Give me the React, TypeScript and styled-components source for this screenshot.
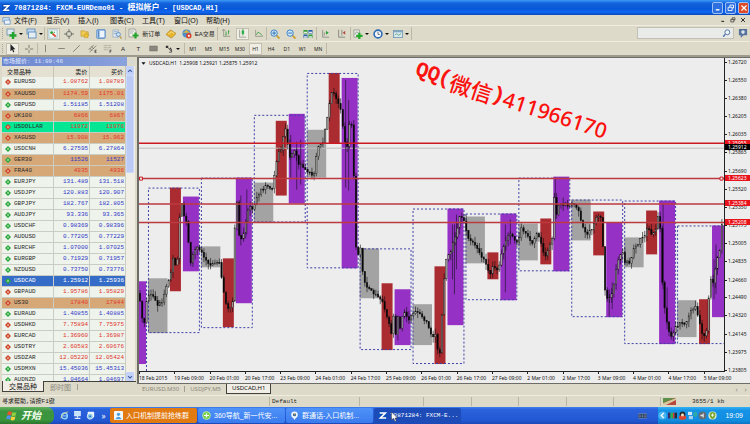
import React from "react";
import styled, { createGlobalStyle, css } from "styled-components";

const SANS = `"Noto Sans", "Noto Sans CJK SC", sans-serif`;
const MONO = `"Liberation Mono", "Noto Sans CJK SC", monospace`;
const MENU = `"Liberation Sans", "Noto Sans CJK SC", sans-serif`;
const FACE = "#dedac9";

const GlobalStyle = createGlobalStyle`
  * { box-sizing: border-box; }
  body { margin: 0; background: ${FACE}; font-family: ${SANS}; color: #222; }
  button, input { font: inherit; color: inherit; border: 0; background: none; padding: 0; margin: 0; }
  svg { display: block; flex: none; }
`;

/* ---------- frame ---------- */
const Page = styled.div`
  display: flex;
  flex-direction: column;
  height: 100vh;
  min-height: 400px;
  overflow: hidden;
`;

const TitleBar = styled.header`
  display: flex;
  align-items: center;
  flex: none;
  height: 15px;
  padding: 0 1px 0 2px;
  background: linear-gradient(#3d9af8 0, #1262dc 22%, #0857d8 60%, #0e66f4 80%, #0b48b8 100%);
`;
const Title = styled.h1`
  flex: 1;
  margin: 0 0 0 4px;
  font: bold 7px/13px ${MONO};
  color: #fff;
  white-space: pre;
`;
const TitleCjk = styled.span`
  font-size: 8px;
`;
const WindowButton = styled.button<{ $close?: boolean }>`
  display: grid;
  place-items: center;
  width: 11px;
  height: 12px;
  margin-left: 2px;
  border: 1px solid #9fc0f5;
  border-radius: 2px;
  color: #fff;
  background: ${(p) => (p.$close ? "#dc4a26" : "#2e6fe0")};
`;

const MenuBar = styled.nav`
  display: flex;
  align-items: center;
  flex: none;
  height: 10px;
  padding: 0 2px;
  background: ${FACE};
`;
const MenuItem = styled.button`
  width: 32px;
  font: 7px/9px ${MENU};
  text-align: left;
  white-space: nowrap;
  color: #111;
`;
const MenuLogo = styled.span`
  width: 12px;
`;
const MdiButton = styled.button`
  display: grid;
  place-items: center;
  width: 10px;
  height: 9px;
`;

/* ---------- toolbars ---------- */
const ToolRow = styled.div<{ $tall?: boolean }>`
  display: flex;
  align-items: stretch;
  flex: none;
  height: ${(p) => (p.$tall ? 16 : 14)}px;
  padding-left: 2px;
  border-top: 1px solid #efece0;
`;
const Grip = styled.span`
  width: 2px;
  margin: 2px 0;
  border-left: 1px dotted #a8a594;
`;
const ToolGroup = styled.div<{ $width: number }>`
  display: flex;
  align-items: center;
  justify-content: space-around;
  width: ${(p) => p.$width}px;
  margin: 1px 0;
  border-right: 1px solid #bdb9a6;
`;
const Tool = styled.button<{ $on?: boolean; $label?: boolean }>`
  display: flex;
  align-items: center;
  justify-content: center;
  gap: 3px;
  min-width: 13px;
  height: 12px;
  white-space: nowrap;
  font: ${(p) => (p.$label ? `6px/10px ${MENU}` : `5px/10px ${SANS}`)};
  ${(p) =>
    p.$on &&
    css`
      background: #efede4;
      outline: 1px solid #c3c0b0;
      outline-offset: -1px;
    `}
`;
const DropTool = styled(Tool)`
  width: 20px;
  gap: 2px;
  &::after {
    content: "";
    border: 2px solid transparent;
    border-top-color: #111;
    border-bottom: 0;
  }
`;
const Spacer = styled.span`
  flex: 1;
`;
const SearchBox = styled.label`
  display: flex;
  align-items: center;
  width: 97px;
  height: 12px;
  margin: 1px 2px 0 0;
  padding-right: 2px;
  background: #e9ebe8;
  border: 1px solid #c2c0b4;
`;
const SearchInput = styled.input`
  flex: 1;
  min-width: 0;
  height: 10px;
  font-size: 6px;
  outline: 0;
`;
const ChatButton = styled.button`
  display: grid;
  place-items: center;
  width: 13px;
  height: 12px;
  margin: 1px 1px 0 0;
`;

/* ---------- market watch ---------- */
const Main = styled.main`
  display: flex;
  flex: 1;
  min-height: 0;
  border-top: 2px solid #9d9a8e;
`;
const Watch = styled.section`
  display: flex;
  flex-direction: column;
  flex: none;
  width: 136px;
  padding-left: 2px;
`;
const WatchTitle = styled.div`
  display: flex;
  align-items: center;
  flex: none;
  height: 9px;
  font: bold 6px/9px ${MONO};
  color: #c6d3f4;
`;
const WatchCaption = styled.h2`
  flex: 1;
  margin: 0;
  padding-left: 1px;
  font: inherit;
  background: linear-gradient(90deg, #6a86cf, #8aa2dc);
`;
const CloseButton = styled.button`
  display: grid;
  place-items: center;
  width: 9px;
  height: 8px;
`;
const WatchBody = styled.div`
  display: flex;
  flex: 1;
  min-height: 0;
  overflow: hidden;
  border-bottom: 1px solid #44423c;
`;
const QuoteTable = styled.table`
  flex: 1;
  align-self: flex-start;
  table-layout: fixed;
  border-collapse: collapse;
  font: 6px/10px ${MONO};
`;
const HeadCell = styled.th<{ $left?: boolean }>`
  width: ${(p) => (p.$left ? "42%" : "29%")};
  height: 11px;
  padding: ${(p) => (p.$left ? "0 0 0 5px" : "0 2px 0 0")};
  text-align: ${(p) => (p.$left ? "left" : "right")};
  font: 6px/10px ${MENU};
  color: #111;
  background: #e4e0d2;
  border-right: 1px solid #c9c5b6;
`;
type Tone = "plain" | "tan" | "green" | "sel";
const tones: Record<Tone, string> = { plain: "#eef3ec", tan: "#d6a878", green: "#05e694", sel: "#356cc8" };
const QuoteRow = styled.tr<{ $tone: Tone }>`
  height: 11px;
  background: ${(p) => tones[p.$tone]};
  color: ${(p) => (p.$tone === "sel" ? "#fff" : "#2a2a2a")};
`;
const SymbolCell = styled.th`
  height: 11px;
  padding: 0 0 0 3px;
  font-weight: normal;
  text-align: left;
  border: solid #c9cdc4;
  border-width: 0 1px 1px 0;
`;
const SymbolName = styled.span`
  display: flex;
  align-items: center;
  gap: 3px;
`;
const PriceCell = styled.td<{ $color: string }>`
  height: 11px;
  padding: 0 1px 0 0;
  text-align: right;
  color: ${(p) => p.$color};
  border: solid #c9cdc4;
  border-width: 0 1px 1px 0;
`;
const ScrollTrack = styled.div`
  display: flex;
  flex-direction: column;
  justify-content: space-between;
  width: 9px;
  margin-right: 1px;
  background: #f1eee6;
`;
const ScrollButton = styled.button`
  display: grid;
  place-items: center;
  width: 8px;
  height: 9px;
  border-radius: 1px;
  background: #c3d2fa;
`;
const ScrollThumb = styled.div`
  width: 8px;
  height: 98px;
  border-radius: 1px;
  background: #bccbf5;
  border: 1px solid #ccd8fb;
`;
const TabStrip = styled.div<{ $height: number }>`
  display: flex;
  flex: none;
  align-items: flex-start;
  height: ${(p) => p.$height}px;
  font: 7px/9px ${MENU};
`;
const Tab = styled.button<{ $on?: boolean; $small?: boolean }>`
  height: 10px;
  padding: 0 6px;
  white-space: nowrap;
  ${(p) =>
    p.$small &&
    css`
      padding: 0 5px;
      font: 6px/9px ${SANS};
    `}
  color: ${(p) => (p.$on ? "#111" : "#8a877b")};
  ${(p) =>
    p.$on &&
    css`
      margin-top: -1px;
      height: 11px;
      background: #f0eee6;
      border: 1px solid #44423c;
      border-top: 0;
    `}
`;

/* ---------- chart ---------- */
const ChartPane = styled.section`
  display: flex;
  flex-direction: column;
  flex: 1;
  min-width: 0;
  margin-left: 1px;
`;
const ChartFrame = styled.div`
  position: relative;
  display: grid;
  grid-template-columns: 1fr 25px;
  grid-template-rows: 1fr 11px;
  flex: 1;
  min-height: 0;
  background: #ededed;
  border: solid #6e6c66;
  border-width: 1px 0 1px 2px;
`;
const Plot = styled.svg`
  width: 100%;
  height: 100%;
  min-height: 0;
  border-right: 1px solid #222;
  border-bottom: 1px solid #222;
`;
const ChartCaption = styled.div`
  position: absolute;
  top: 1px;
  left: 2px;
  display: flex;
  align-items: center;
  gap: 3px;
  font: 5px/8px ${SANS};
  color: #111;
  white-space: pre;
`;
const PriceAxis = styled.div`
  position: relative;
  font: 5px/6px ${SANS};
  color: #111;
`;
const PriceMark = styled.span<{ $fill?: string }>`
  position: absolute;
  left: 0;
  right: 0;
  height: 6px;
  margin-top: -3px;
  padding-left: 3px;
  color: ${(p) => (p.$fill ? "#fff" : "#111")};
  background: ${(p) => p.$fill || "none"};
  &::before {
    content: "";
    position: absolute;
    left: 0;
    top: 3px;
    width: 2px;
    height: 1px;
    background: ${(p) => p.$fill || "#222"};
  }
`;
const TimeAxis = styled.div`
  grid-column: 1 / -1;
  display: grid;
  grid-template-columns: repeat(17, 1fr);
  padding-right: 11px;
  font: 5px/8px ${SANS};
  color: #111;
`;
const TimeMark = styled.span`
  min-width: 0;
  white-space: nowrap;
  &::before {
    content: "";
    display: block;
    width: 1px;
    height: 2px;
    background: #222;
  }
`;
const Watermark = styled.div`
  position: absolute;
  left: 46%;
  top: 0;
  display: flex;
  align-items: center;
  color: #fb100c;
  font: 500 21px/24px "Noto Sans", sans-serif;
  white-space: nowrap;
  transform-origin: 0 0;
  transform: rotate(18deg);
`;
const WatermarkMono = styled.span`
  font: 20px/24px "Liberation Mono", monospace;
  -webkit-text-stroke: 1px #fb100c;
`;
const WatermarkCjk = styled.span`
  font: 500 22px/24px "Noto Sans CJK SC", sans-serif;
`;
const TabDivider = styled.span`
  width: 1px;
  height: 6px;
  margin-top: 2px;
  background: #a19e90;
`;
const ScrollTabs = styled.button`
  width: 9px;
  height: 10px;
  font: 7px/9px ${SANS};
  color: #8d8b84;
`;

/* ---------- status and task bars ---------- */
const StatusBar = styled.footer`
  display: flex;
  align-items: center;
  flex: none;
  height: 12px;
  font: 6px/10px ${MONO};
  border-top: 1px solid #efece0;
  color: #222;
`;
const StatusCell = styled.span<{ $width?: number }>`
  display: flex;
  align-items: center;
  ${(p) => (p.$width ? `flex: 0 0 ${p.$width}px;` : "flex: 1;")}
  height: 9px;
  padding-left: 2px;
  white-space: pre;
  & + & {
    border-left: 1px solid #bab6a4;
  }
`;
const StatusText = styled.span`
  margin-left: 16px;
`;
const TaskBar = styled.div`
  display: flex;
  align-items: center;
  flex: none;
  height: 17px;
  color: #fff;
  background: linear-gradient(#3d7ff0 0, #2a62dc 15%, #2257d2 80%, #1c48b4 100%);
`;
const StartButton = styled.button`
  display: flex;
  align-items: center;
  gap: 4px;
  width: 54px;
  height: 17px;
  padding-left: 6px;
  border-radius: 0 7px 7px 0;
  font: italic bold 10px/15px ${MENU};
  color: #f3fff0;
  background: linear-gradient(#63b45f 0, #3c9340 25%, #3a963c 75%, #2b7430 100%);
`;
const QuickLaunch = styled.div`
  display: flex;
  align-items: center;
  justify-content: space-around;
  width: 56px;
  padding-left: 4px;
`;
const QuickButton = styled.button`
  display: grid;
  place-items: center;
  width: 11px;
  height: 13px;
  font: 8px/10px ${SANS};
`;
const Task = styled.button<{ $look?: "alert" | "current" }>`
  position: relative;
  display: flex;
  align-items: center;
  gap: 3px;
  width: 87px;
  height: 15px;
  margin-right: 1px;
  padding-left: 4px;
  border-radius: 2px;
  overflow: hidden;
  white-space: pre;
  font: 7px/13px ${MENU};
  background: ${(p) =>
    p.$look === "alert" ? "#e27a12" : p.$look === "current" ? "#1d4cb8" : "linear-gradient(#4f92f8, #3a7cee)"};
`;
const MonoLabel = styled.span`
  font: 6px/13px ${MONO};
`;
const Pointer = styled.svg`
  position: absolute;
  left: 17px;
  top: 4px;
`;
const Tray = styled.div`
  display: flex;
  align-items: center;
  gap: 1px;
  height: 17px;
  padding: 0 7px 0 0;
  font: 7px/15px ${MENU};
  background: linear-gradient(#35b0f4 0, #1593e6 20%, #118de0 80%, #0f72c0 100%);
`;
const Clock = styled.time`
  margin-left: 7px;
`;
const Keyboard = styled.span`
  margin-right: 11px;
`;

/* ---------- icons ---------- */
const art: Record<string, React.ReactNode> = {
  newChart: (<><rect x="1" y="1" width="7" height="6" fill="#dfe9f2" stroke="#5b7f9c" strokeWidth=".7" /><path d="M7 4v7M3.500 7.500h7" stroke="#22a52c" strokeWidth="2.400" /></>),
  profiles: (<><rect x="1" y="1" width="8" height="5" fill="#c7dcf1" stroke="#5484b4" strokeWidth=".8" /><rect x="2.500" y="4" width="7.500" height="6" fill="#e2edf6" stroke="#5484b4" strokeWidth=".8" /></>),
  watch: (<><rect x="1" y="1" width="9" height="9" fill="#f4f8f4" stroke="#7ab0d0" strokeWidth=".7" /><circle cx="4" cy="4" r="1.600" fill="#26a63a" /><path d="M5 5l3.500 3.500" stroke="#dd4631" strokeWidth="2" /><path d="M7 3v1.500" stroke="#26a63a" /></>),
  navigator: (<><circle cx="5.500" cy="5.500" r="3" fill="none" stroke="#777b73" /><path d="M5.500 0v4M5.500 7v4M0 5.500h4M7 5.500h4" stroke="#686d66" /></>),
  folder: (<><path d="M1 2h4l1 1h3v5H1z" fill="#f0cb55" stroke="#b58b23" strokeWidth=".6" /><path d="M7 4l1 2 2 .4-1.500 1.500.4 2L7 9l-2 1 .3-2L4 6.400 6.200 6z" fill="#f6c62c" stroke="#b58b23" strokeWidth=".5" /></>),
  dataWin: (<><rect x="1" y="1" width="9" height="9" rx="1" fill="#edf4fa" stroke="#4c86c8" strokeWidth="1.200" /><path d="M3 2v7" stroke="#4c86c8" strokeWidth="1.500" /></>),
  tester: (<><path d="M1 1h6v8H1z" fill="#dfe8f0" stroke="#8ba3b8" strokeWidth=".7" /><path d="M2 3h4M2 5h3" stroke="#6d8fb2" strokeWidth=".7" /><circle cx="7" cy="6" r="2.200" fill="#cfe3f6" stroke="#4176b8" strokeWidth=".8" /><path d="M8.500 8l2 2.500" stroke="#b8963c" strokeWidth="1.300" /></>),
  order: (<><path d="M1 1h6l1 2v6H1z" fill="#f2f2ed" stroke="#777" strokeWidth=".6" /><path d="M2 3h4M2 5h3" stroke="#888" strokeWidth=".6" /><path d="M7.500 4.500v6M4.500 7.500h6" stroke="#25a52d" strokeWidth="2.200" /></>),
  editor: (<><path d="M0 6l5-5 6 4-5 5z" fill="#e8b52c" stroke="#a87a15" strokeWidth=".7" /><path d="M2 6l4-3 3 2" fill="none" stroke="#fae58e" /></>),
  ea: (<><circle cx="5" cy="5" r="4.500" fill="#4b8fca" /><path d="M1 4l4-3 4 3z" fill="#e2b33c" /><circle cx="7.500" cy="7.500" r="3" fill="#d8412c" /><rect x="6.500" y="6.500" width="2" height="2" fill="#fff" /></>),
  bars: (<><path d="M2 1v8h8M0 2.500L2 0l2 2.500" fill="none" stroke="#7c8279" strokeWidth=".8" /><path d="M5 3v5M4 7h1M8 1.500v5M8 3h1" stroke="#2a9a39" /></>),
  candles: (<><path d="M2 1v9h8" fill="none" stroke="#7c8279" strokeWidth=".8" /><path d="M6 0v8" stroke="#238433" /><rect x="4.500" y="2" width="3" height="4" fill="#2bb04a" /></>),
  line: (<><path d="M2 1v8h9" fill="none" stroke="#7c8279" strokeWidth=".8" /><path d="M3 7l2-3 2 1 3 3" fill="none" stroke="#2a9a39" /></>),
  zoomIn: (<><path d="M7 7l3.500 3.500" stroke="#c6a030" strokeWidth="2" /><circle cx="4.500" cy="4.500" r="3.500" fill="#cfe6f6" stroke="#3e87c8" strokeWidth="1.100" /><path d="M4.500 2.500v4M2.500 4.500h4" stroke="#286cb4" /></>),
  zoomOut: (<><path d="M7 7l3.500 3.500" stroke="#c6a030" strokeWidth="2" /><circle cx="4.500" cy="4.500" r="3.500" fill="#cfe6f6" stroke="#3e87c8" strokeWidth="1.100" /><path d="M2.500 4.500h4" stroke="#286cb4" /></>),
  tile: (<><path d="M.5 1h4.500v4H.5zM6 6h4.500v4H6z" fill="#2f9c3c" /><path d="M6 1h4.500v4H6zM.5 6H5v4H.5z" fill="#2b5fae" /><path d="M1 3h3.500v1.500H1zM6.500 3H10v1.500H6.500zM1 8h3.500v1.500H1zM6.500 8H10v1.500H6.500z" fill="#e4eee8" /></>),
  autoscroll: (<><path d="M2 1v9h8M4 4v4" fill="none" stroke="#7c8279" strokeWidth=".9" /><path d="M6 2l3.500 2.500L6 7z" fill="#26a038" /></>),
  shift: (<><path d="M2 1v9h8M6 1v7" fill="none" stroke="#6c726a" strokeWidth=".9" /><path d="M10 2L7 4.500 10 7z" fill="#b1483c" /></>),
  indicator: (<><path d="M1 1h6v8H1z" fill="#eceee8" stroke="#7f867e" strokeWidth=".7" /><path d="M2 6q2-5 4-1" fill="none" stroke="#666" strokeWidth=".7" /><path d="M7 4v7M3.500 7.500h7" stroke="#23aa2b" strokeWidth="2.400" /></>),
  clock: (<><circle cx="5.500" cy="5.500" r="4.300" fill="#f3f7fb" stroke="#2e6ab6" strokeWidth="1.800" /><path d="M5.500 3v3h2" fill="none" stroke="#444" strokeWidth=".8" /></>),
  template: (<><rect x=".5" y="1.500" width="10" height="8" fill="#d9e8ef" stroke="#5e8cab" strokeWidth=".8" /><path d="M1 3h9" stroke="#5e8cab" /><path d="M2 7l2-2 2 2 3-2" fill="none" stroke="#3f9a60" strokeWidth=".8" /></>),
  cursor: (<path d="M3 0v9l2-2 1.500 3.500 1.300-.6L6.400 6.500H9z" fill="#222" />),
  cross: (<path d="M5.500 1v3.500M5.500 6.500V10M1 5.500h3.500M6.500 5.500H10" stroke="#77756c" />),
  vline: (<path d="M5.500 1v9" stroke="#77756c" />),
  hline: (<path d="M1.500 5.500h8" stroke="#77756c" />),
  trend: (<path d="M1.500 9.500l8-8" stroke="#77756c" />),
  channel: (<><path d="M1 7l6-6M2 10l8-8M2 5l3 3M4 3l3 3" stroke="#5c5a53" strokeWidth=".8" /><path d="M10.500 7.500H8.500v3h2M8.500 9h1.500" fill="none" stroke="#333" strokeWidth=".8" /></>),
  fib: (<><path d="M1 2h9M1 4.500h9M1 7h6" stroke="#85826f" strokeDasharray="1 .6" strokeWidth=".8" /><path d="M8.500 11V7.500h2M8.500 9h1.500" fill="none" stroke="#333" strokeWidth=".8" /></>),
  textBox: (<rect x=".5" y=".5" width="10" height="10" fill="none" stroke="#77756c" strokeDasharray="1 1" strokeWidth=".8" />),
  rect: (<rect x="1" y="2.500" width="9" height="6" fill="#8a887e" stroke="#5f5d55" strokeWidth=".6" />),
  arrows: (<><path d="M1 2h3v3H1zM5 6l2-2 1 3z" fill="#333" /><path d="M4 5l4 4M8 6v4H5" fill="none" stroke="#444" /></>),
  search: (<><circle cx="6.500" cy="4" r="3" fill="#eef4fa" stroke="#5676aa" strokeWidth="1.200" /><path d="M4 6.500L1.500 9.500" stroke="#5676aa" strokeWidth="1.700" /></>),
  chat: (<><path d="M1 1h9v7H6l-3 3V8H1z" fill="#56719b" /><circle cx="5.500" cy="4.500" r="2" fill="#dbe4ef" /></>),
  logo: (<><rect width="11" height="11" rx="2" fill="#0d4fbb" /><path d="M2 2.500h7L3 8.500h7" fill="none" stroke="#fff" strokeWidth="2" /></>),
  doc: (<><path d="M1 2h8v5H1z" fill="#d7e6f5" stroke="#4e82bd" strokeWidth=".8" /><path d="M3 5h7v5H3z" fill="#eef4fa" stroke="#4e82bd" strokeWidth=".8" /></>),
  min: (<path d="M2.500 8h5" stroke="currentColor" strokeWidth="2" />),
  restore: (<path d="M4 4V1.500h5v4H7M1.500 4.500h5.500v4.500H1.500z" fill="none" stroke="currentColor" strokeWidth="1.200" />),
  close: (<path d="M2 2l7 7M9 2L2 9" stroke="currentColor" strokeWidth="1.700" />),
  up: (<path d="M2 7l3.500-3.500L9 7" fill="none" stroke="#3f5c9c" strokeWidth="2" />),
  down: (<path d="M2 4l3.500 3.500L9 4" fill="none" stroke="#3f5c9c" strokeWidth="2" />),
  caret: (<path d="M1 3h9L5.500 8z" fill="#111" />),
  flag: (<><path d="M2 2q2-1.500 4 0L5 5.500q-2-1.500-4 0z" fill="#e8552d" /><path d="M6.500 2q2 1.500 4 0l-1 3.500q-2 1.500-4 0z" fill="#8fd046" /><path d="M1 6q2-1.500 4 0l-1 3.500q-2-1.500-4 0z" fill="#4f93ee" /><path d="M5.500 6.200q2 1.500 4 0l-1 3.500q-2 1.500-4 0z" fill="#f8cf3c" /></>),
  ie: (<><circle cx="5.500" cy="6" r="3.500" fill="none" stroke="#8fd2ff" strokeWidth="1.800" /><path d="M3 6h6" stroke="#8fd2ff" strokeWidth="1.400" /><path d="M1 9Q2 3 10 1" fill="none" stroke="#f2d878" strokeWidth=".9" /></>),
  desktop: (<><rect x="2" y="0" width="7" height="6" fill="#c5e3fb" stroke="#fff" strokeWidth=".7" /><path d="M5.500 6v2M2 9h7" stroke="#e3eefb" strokeWidth="1.500" /></>),
  media: (<><rect x="2" y="1" width="8" height="7" rx="1" fill="#e8f3fb" /><circle cx="5" cy="6.500" r="3.500" fill="#7fc0ec" stroke="#fff" strokeWidth=".8" /><circle cx="5" cy="6.500" r="1" fill="#205c9c" /></>),
  contact: (<><rect width="11" height="11" rx="1" fill="#f3f7fa" /><circle cx="5.500" cy="4" r="2" fill="#4ba0dc" /><path d="M1.500 10q4-6 8 0z" fill="#4ba0dc" /></>),
  browser: (<><circle cx="5.500" cy="5.500" r="4.800" fill="#72cf48" stroke="#dcf5c8" strokeWidth=".8" /><path d="M2.500 5.500h6M5.500 3v5" stroke="#fff" strokeWidth="1.500" /></>),
  group: (<><circle cx="5.500" cy="4.500" r="4" fill="#eef6fc" /><path d="M3 7l2.500 4L8 7z" fill="#eef6fc" /><circle cx="5.500" cy="4.500" r="2" fill="#356a9d" /><circle cx="5.500" cy="3.500" r="1" fill="#f2c45c" /></>),
  keys: (<><rect x="0" y="3" width="11" height="6" rx="1" fill="#2b3e60" stroke="#9db6dd" strokeWidth=".5" /><path d="M1 5h9M1 7h9" stroke="#c7d6ee" strokeDasharray="1 1" strokeWidth=".8" /></>),
  chevron: (<><circle cx="5.500" cy="5.500" r="5" fill="#48b5f5" /><path d="M7 2.500L4 5.500l3 3" fill="none" stroke="#fff" strokeWidth="1.500" /></>),
  books: (<><rect x="0" y="2" width="3" height="7" fill="#3b2b6a" /><rect x="3" y="2" width="3" height="7" fill="#2fb14a" /><rect x="6" y="2" width="2" height="7" fill="#d33b35" /><rect x="8" y="2" width="3" height="7" fill="#232a35" /></>),
  penguin: (<><circle cx="5.500" cy="4" r="3.500" fill="#24282e" /><ellipse cx="5.500" cy="8" rx="4.500" ry="2.800" fill="#df4630" /><circle cx="5.500" cy="5" r="1.800" fill="#f4e4c7" /></>),
  net: (<><rect x="0" y="1" width="5" height="4" fill="#cfe7f8" /><rect x="1" y="6" width="5" height="4" fill="#a8d0ee" /><path d="M7 2q2 2 0 4M9 1q3 3 0 6" fill="none" stroke="#57d24a" /></>),
  sound: (<><circle cx="5.500" cy="5.500" r="4.800" fill="#646c74" /><path d="M3 4.500h2l2-2v6l-2-2H3z" fill="#e4e7ea" /></>),
  shield: (<><circle cx="5.500" cy="5.500" r="5" fill="#e8efd9" /><path d="M5.500 1l3.500 1.500v3q0 3-3.500 4.500Q2 8.500 2 5.500v-3z" fill="#78a832" /><path d="M5.500 3v4M3.500 5h4" stroke="#fff" /></>),
};
const Icon = ({ n, s = 11 }: { n: string; s?: number }) => (
  <svg width={s} height={s} viewBox="0 0 11 11" aria-hidden="true">{art[n]}</svg>
);

/* ---------- data ---------- */
type Quote = [string, string, string, "u" | "d", ("r" | "b")?, Tone?];
const quotes: Quote[] = [
  ["EURUSD", "1.08762", "1.08789", "d", "r"],
  ["XAUUSD", "1174.59", "1175.01", "d", "r", "tan"],
  ["GBPUSD", "1.51185", "1.51208", "u"],
  ["UK100", "6866", "6867", "d", "r", "tan"],
  ["USDOLLAR", "11972", "11976", "d", "r", "green"],
  ["XAGUSD", "15.908", "15.962", "d", "r", "tan"],
  ["USDCNH", "6.27595", "6.27864", "u"],
  ["GER30", "11526", "11527", "u", "b", "tan"],
  ["FRA40", "4935", "4936", "d", "r", "tan"],
  ["EURJPY", "131.489", "131.518", "u"],
  ["USDJPY", "120.883", "120.907", "u"],
  ["GBPJPY", "182.767", "182.805", "u"],
  ["AUDJPY", "93.336", "93.365", "u"],
  ["USDCHF", "0.98369", "0.98396", "u"],
  ["AUDUSD", "0.77205", "0.77229", "u"],
  ["EURCHF", "1.07000", "1.07025", "u"],
  ["EURGBP", "0.71929", "0.71957", "u"],
  ["NZDUSD", "0.73750", "0.73776", "u"],
  ["USDCAD", "1.25912", "1.25936", "u", "b", "sel"],
  ["GBPAUD", "1.95786", "1.95829", "d", "r"],
  ["US30", "17840", "17844", "d", "r", "tan"],
  ["EURAUD", "1.40855", "1.40885", "u"],
  ["USDHKD", "7.75894", "7.75975", "d", "r"],
  ["EURCAD", "1.36960", "1.36987", "d", "r"],
  ["USDTRY", "2.60583", "2.60676", "d", "r"],
  ["USDZAR", "12.05220", "12.05424", "d", "r"],
  ["USDMXN", "15.45036", "15.45313", "u"],
  ["AUDNZD", "1.04664", "1.04697", "u"],
];

const menus = ["文件(F)", "显示(V)", "插入(I)", "图表(C)", "工具(T)", "窗口(O)", "帮助(H)"];
const panelTools: [string, string][] = [
  ["watch", "市场报价"], ["navigator", "导航"], ["folder", "终端"], ["dataWin", "数据窗口"], ["tester", "策略测试"],
];
const lineTools: [string, string][] = [
  ["vline", "垂直线"], ["hline", "水平线"], ["trend", "趋势线"], ["channel", "通道"], ["fib", "斐波那契"],
];
const periods = ["M1", "M5", "M15", "M30", "H1", "H4", "D1", "W1", "MN"];
const prices = [
  "1.26720", "1.26550", "1.26380", "1.26205", "1.26035", "1.25865", "1.25690", "1.25520", "1.25350",
  "1.25175", "1.25005", "1.24835", "1.24660", "1.24490", "1.24320", "1.24145", "1.23975", "1.23805",
];
const priceTags = [["1.25955", "#e8141c"], ["1.25912", "#000"], ["1.25623", "#e8141c"], ["1.25384", "#e8141c"], ["1.25208", "#e8141c"]];
const times = [
  "18 Feb 2015", "19 Feb 09:00", "20 Feb 01:00", "20 Feb 17:00", "23 Feb 09:00", "24 Feb 01:00", "24 Feb 17:00",
  "25 Feb 09:00", "26 Feb 01:00", "26 Feb 17:00", "27 Feb 09:00", "2 Mar 01:00", "2 Mar 17:00", "3 Mar 09:00",
  "4 Mar 01:00", "4 Mar 17:00", "5 Mar 09:00",
];
const pricePercent = (p: string) => `${1.3 + ((1.2672 - Number(p)) / (1.2672 - 1.23805)) * 98}%`;

/* One trading day: left edge, then top/bottom of the day range and of the Asia, London and New York sessions. */
const days: number[][] = [
  [148, 188, 334, 279, 334, 188, 292, 197, 272],
  [201, 178, 329, 247, 268, 259, 328, 178, 304],
  [254, 115, 223, 183, 223, 121, 196, 114, 204],
  [307, 73, 269, 130, 178, 73, 144, 78, 269],
  [360, 249, 351, 249, 299, 284, 351, 290, 346],
  [413, 209, 365, 305, 346, 267, 365, 209, 326],
  [466, 214, 301, 217, 264, 253, 280, 214, 301],
  [519, 178, 272, 224, 261, 219, 265, 177, 272],
  [572, 200, 318, 200, 241, 212, 256, 223, 318],
  [625, 201, 345, 238, 268, 211, 255, 201, 345],
  [678, 226, 345, 301, 338, 300, 345, 226, 318],
];

const track: number[] = [
  139, 293, 143, 305, 146, 332, 148, 302, 152, 294, 156, 298, 160, 308, 165, 301, 168, 290, 170, 283, 173, 272, 175, 258,
  179, 270, 181, 240, 183, 190, 185, 212, 187, 220, 190, 225, 191, 250, 193, 262, 197, 250, 200, 249, 205, 254, 210, 265,
  222, 265, 225, 285, 228, 306, 232, 309, 235, 302, 237, 230, 239, 196, 241, 235, 245, 240, 248, 222, 252, 205, 254, 212,
  258, 203, 262, 192, 268, 186, 275, 188, 277, 175, 280, 155, 284, 148, 287, 125, 289, 135, 292, 160, 297, 150, 301, 165,
  304, 163, 307, 170, 312, 172, 316, 176, 320, 150, 326, 140, 329, 125, 333, 95, 336, 92, 341, 105, 344, 113, 347, 140,
  349, 155, 352, 125, 355, 127, 357, 200, 358, 245, 361, 255, 363, 250, 366, 280, 370, 288, 378, 295, 384, 300, 388, 313,
  392, 325, 395, 340, 397, 300, 398, 340, 400, 310, 402, 335, 406, 312, 411, 322, 415, 315, 420, 313, 425, 318, 431, 326,
  434, 337, 438, 335, 442, 360, 444, 330, 446, 295, 448, 262, 450, 258, 453, 255, 457, 240, 460, 228, 463, 215, 467, 222,
  472, 240, 480, 250, 487, 262, 492, 275, 496, 268, 500, 270, 503, 262, 507, 245, 512, 232, 516, 236, 520, 245, 524, 230,
  528, 232, 536, 245, 540, 232, 544, 245, 549, 258, 552, 245, 555, 244, 556, 185, 559, 215, 563, 203, 568, 205, 575, 205,
  582, 212, 586, 228, 590, 235, 595, 230, 600, 215, 605, 218, 607, 285, 610, 300, 616, 292, 620, 262, 625, 252, 628, 262,
  632, 265, 637, 250, 643, 241, 648, 237, 651, 225, 655, 237, 659, 228, 662, 210, 664, 240, 666, 300, 670, 325, 674, 340,
  678, 328, 684, 325, 690, 322, 694, 312, 698, 306, 702, 318, 705, 335, 709, 338, 711, 320, 713, 275, 716, 285, 720, 260,
  723, 250, 725, 226,
];
const levelAt = (x: number) => {
  let i = 0;
  while (i < track.length - 4 && track[i + 2] < x) i += 2;
  const t = Math.min(1, (x - track[i]) / (track[i + 2] - track[i]));
  return track[i + 1] + (track[i + 3] - track[i + 1]) * t;
};
const noise = (i: number) => {
  const v = Math.sin(i * 127.1) * 43758.5453;
  return v - Math.floor(v);
};
const candles = Array.from({ length: 265 }, (_, i) => {
  const x = 140 + i * 2.208;
  const open = levelAt(x) + (noise(i) - 0.5) * 4;
  const close = levelAt(x + 2.2) + (noise(i + 1) - 0.5) * 4;
  const top = Math.min(open, close);
  const bottom = Math.max(open, close);
  return { x, top, bottom, falling: close >= open, high: top - noise(i + 500) * 6, low: bottom + noise(i + 900) * 6 };
});
const longWicks = [[241, 196, 246], [247, 190, 235], [291, 135, 178], [297, 142, 190], [301, 140, 185], [346, 80, 188], [349, 100, 191], [453, 225, 280], [455, 225, 295], [457, 215, 270], [506, 225, 293], [511, 220, 245], [556, 178, 220], [610, 290, 317], [613, 283, 310], [664, 204, 290], [668, 288, 330], [715, 260, 300], [717, 245, 295]];

const ChartDrawing = () => (
  <Plot viewBox="139 58 586 314" preserveAspectRatio="none" role="img" aria-label="USDCAD H1">
    <rect x="139" y="282" width="7" height="83" fill="#9631c6" />
    <path d="M146.500 282V372" stroke="#3f3fa8" strokeDasharray="2 2" />
    {days.map(([x, t, b, at, ab, lt, lb, nt, nb]) => (
      <g key={x}>
        <rect x={x} y={at} width="19.500" height={ab - at} fill="#a3a3a3" />
        <rect x={x + 22} y={lt} width="11" height={lb - lt} fill="#aa2b30" />
        <rect x={x + 35} y={nt} width="16" height={nb - nt} fill="#9631c6" />
        <rect x={x + 0.5} y={t + 0.5} width="51" height={b - t - 1} fill="none" stroke="#3f3fa8" strokeDasharray="2 2" />
      </g>
    ))}
    <path d="M139 148.500H725" stroke="#bdbdbd" />
    {longWicks.map(([x, a, b]) => (
      <path key={x} d={`M${x} ${a}V${b}`} stroke="#241430" strokeWidth=".7" />
    ))}
    {candles.map((c) => (
      <g key={c.x} stroke="#111">
        <path d={`M${c.x} ${c.high}V${c.low}`} strokeWidth=".6" />
        <rect x={c.x - 0.7} y={c.top} width="1.400" height={Math.max(1, c.bottom - c.top)} strokeWidth=".4" fill={c.falling ? "#050505" : "#a5a5a0"} />
      </g>
    ))}
    <path d="M139 143.500H725" stroke="#cc1a24" strokeWidth="1.500" />
    <path d="M139 179H725M139 204.500H725M139 223H725" stroke="#bd3a40" strokeWidth="1.500" />
    <path d="M139.500 177.500h3v3h-3zM721 177.500h3v3h-3z" fill="#ededed" stroke="#cc1a24" />
  </Plot>
);

const priceColor = (q: Quote) => (q[5] === "sel" ? "#fff" : q[4] === "r" ? "#e2362c" : "#3238c8");

export default function App() {
  return (
    <Page>
      <GlobalStyle />
      <TitleBar>
        <Icon n="logo" s={8} />
        <Title>
          70871284: FXCM-EURDemo01 - <TitleCjk>模拟帐户</TitleCjk> - [USDCAD,H1]
        </Title>
        <WindowButton aria-label="最小化"><Icon n="min" s={8} /></WindowButton>
        <WindowButton aria-label="还原"><Icon n="restore" s={8} /></WindowButton>
        <WindowButton aria-label="关闭" $close><Icon n="close" s={8} /></WindowButton>
      </TitleBar>

      <MenuBar>
        <MenuLogo><Icon n="doc" s={9} /></MenuLogo>
        {menus.map((m) => <MenuItem key={m}>{m}</MenuItem>)}
        <Spacer />
        <MdiButton aria-label="最小化图表"><Icon n="min" s={6} /></MdiButton>
        <MdiButton aria-label="还原图表"><Icon n="restore" s={6} /></MdiButton>
        <MdiButton aria-label="关闭图表"><Icon n="close" s={6} /></MdiButton>
      </MenuBar>

      <ToolRow $tall>
        <Grip />
        <ToolGroup $width={41}>
          <DropTool aria-label="新图表"><Icon n="newChart" /></DropTool>
          <DropTool aria-label="配置文件"><Icon n="profiles" /></DropTool>
        </ToolGroup>
        <ToolGroup $width={81}>
          {panelTools.map(([n, label]) => (
            <Tool key={n} aria-label={label} $on={n === "watch"}><Icon n={n} s={10} /></Tool>
          ))}
        </ToolGroup>
        <ToolGroup $width={92}>
          <Tool $label><Icon n="order" />新订单</Tool>
          <Tool aria-label="编辑器"><Icon n="editor" s={10} /></Tool>
          <Tool $label><Icon n="ea" s={10} />EA交易</Tool>
        </ToolGroup>
        <ToolGroup $width={49}>
          <Tool aria-label="柱状图"><Icon n="bars" s={9} /></Tool>
          <Tool aria-label="K线图" $on><Icon n="candles" s={9} /></Tool>
          <Tool aria-label="折线图"><Icon n="line" s={9} /></Tool>
        </ToolGroup>
        <ToolGroup $width={50}>
          <Tool aria-label="放大"><Icon n="zoomIn" s={10} /></Tool>
          <Tool aria-label="缩小"><Icon n="zoomOut" s={10} /></Tool>
          <Tool aria-label="平铺"><Icon n="tile" s={10} /></Tool>
        </ToolGroup>
        <ToolGroup $width={34}>
          <Tool aria-label="自动滚动"><Icon n="autoscroll" s={9} /></Tool>
          <Tool aria-label="图表平移"><Icon n="shift" s={9} /></Tool>
        </ToolGroup>
        <ToolGroup $width={61}>
          <DropTool aria-label="指标"><Icon n="indicator" s={10} /></DropTool>
          <DropTool aria-label="周期"><Icon n="clock" s={10} /></DropTool>
          <DropTool aria-label="模板"><Icon n="template" s={10} /></DropTool>
        </ToolGroup>
        <Spacer />
        <SearchBox>
          <SearchInput type="search" aria-label="搜索" />
          <Icon n="search" s={9} />
        </SearchBox>
        <ChatButton aria-label="消息"><Icon n="chat" s={10} /></ChatButton>
      </ToolRow>

      <ToolRow>
        <Grip />
        <ToolGroup $width={34}>
          <Tool aria-label="光标" $on><Icon n="cursor" s={9} /></Tool>
          <Tool aria-label="十字线"><Icon n="cross" s={10} /></Tool>
        </ToolGroup>
        <ToolGroup $width={147}>
          {lineTools.map(([n, label]) => (
            <Tool key={n} aria-label={label}><Icon n={n} s={9} /></Tool>
          ))}
          <Tool $label>A</Tool>
          <Tool $label>T</Tool>
          <Tool aria-label="矩形"><Icon n="rect" s={9} /></Tool>
          <DropTool aria-label="箭头"><Icon n="arrows" s={9} /></DropTool>
        </ToolGroup>
        <ToolGroup $width={142}>
          {periods.map((p) => <Tool key={p} $on={p === "H1"} aria-pressed={p === "H1"}>{p}</Tool>)}
        </ToolGroup>
      </ToolRow>

      <Main>
        <Watch>
          <WatchTitle>
            <WatchCaption>市场报价: 11:09:46</WatchCaption>
            <CloseButton aria-label="关闭市场报价"><Icon n="close" s={5} /></CloseButton>
          </WatchTitle>
          <WatchBody>
            <QuoteTable>
              <thead>
                <tr>
                  <HeadCell $left scope="col">交易品种</HeadCell>
                  <HeadCell scope="col">卖价</HeadCell>
                  <HeadCell scope="col">买价</HeadCell>
                </tr>
              </thead>
              <tbody>
                {quotes.map((q) => (
                  <QuoteRow key={q[0]} $tone={q[5] || "plain"}>
                    <SymbolCell scope="row">
                      <SymbolName>
                        <svg width="6" height="6" viewBox="0 0 6 6" aria-hidden="true">
                          <path d="M3 0l3 3-3 3-3-3z" fill={q[3] === "u" ? "#27a83c" : "#cf4426"} />
                          <path d={q[3] === "u" ? "M3 1.500l1 2H2z" : "M3 4.500l1-2H2z"} fill="#f2ede0" />
                        </svg>
                        {q[0]}
                      </SymbolName>
                    </SymbolCell>
                    <PriceCell $color={priceColor(q)}>{q[1]}</PriceCell>
                    <PriceCell $color={priceColor(q)}>{q[2]}</PriceCell>
                  </QuoteRow>
                ))}
              </tbody>
            </QuoteTable>
            <ScrollTrack>
              <div>
                <ScrollButton aria-label="向上滚动"><Icon n="up" s={6} /></ScrollButton>
                <ScrollThumb />
              </div>
              <ScrollButton aria-label="向下滚动"><Icon n="down" s={6} /></ScrollButton>
            </ScrollTrack>
          </WatchBody>
          <TabStrip $height={13}>
            <Tab $on>交易品种</Tab>
            <Tab>即时图</Tab>
            <TabDivider />
          </TabStrip>
        </Watch>

        <ChartPane>
          <ChartFrame>
            <ChartDrawing />
            <PriceAxis>
              {prices.map((p) => <PriceMark key={p} style={{ top: pricePercent(p) }}>{p}</PriceMark>)}
              {priceTags.map(([p, fill]) => <PriceMark key={p} $fill={fill} style={{ top: pricePercent(p) }}>{p}</PriceMark>)}
            </PriceAxis>
            <TimeAxis>
              {times.map((t) => <TimeMark key={t}>{t}</TimeMark>)}
            </TimeAxis>
            <ChartCaption>
              <Icon n="caret" s={5} />
              {"USDCAD,H1  1.25908 1.25921 1.25875 1.25912"}
            </ChartCaption>
            <Watermark>
              <WatermarkMono>QQ(</WatermarkMono>
              <WatermarkCjk>微信</WatermarkCjk>
              <WatermarkMono>)</WatermarkMono>
              411966170
            </Watermark>
          </ChartFrame>
          <TabStrip $height={11}>
            <Tab $small>EURUSD,M30</Tab>
            <TabDivider />
            <Tab $small>USDJPY,M5</Tab>
            <Tab $small $on>USDCAD,H1</Tab>
            <Spacer />
            <ScrollTabs aria-label="上一个">‹</ScrollTabs>
            <ScrollTabs aria-label="下一个">›</ScrollTabs>
          </TabStrip>
        </ChartPane>
      </Main>

      <StatusBar>
        <StatusCell>寻求帮助,请按F1键</StatusCell>
        <StatusCell $width={90}>Default</StatusCell>
        <StatusCell $width={64} />
        <StatusCell $width={48} />
        <StatusCell $width={47} />
        <StatusCell $width={48} />
        <StatusCell $width={47} />
        <StatusCell $width={47} />
        <StatusCell $width={90}>
          <svg width="13" height="7" viewBox="0 0 13 7" aria-hidden="true">
            <rect width="13" height="7" fill="#b8473c" />
            <path d="M0 7V5l13-5v2L3 7z" fill="#d8c8a0" />
            <path d="M0 0h12L0 5z" fill="#5c8f48" />
          </svg>
          <StatusText>3655/1 kb</StatusText>
        </StatusCell>
      </StatusBar>

      <TaskBar>
        <StartButton><Icon n="flag" s={11} />开始</StartButton>
        <QuickLaunch>
          <QuickButton aria-label="浏览器"><Icon n="ie" s={9} /></QuickButton>
          <QuickButton aria-label="桌面"><Icon n="desktop" s={9} /></QuickButton>
          <QuickButton aria-label="播放器"><Icon n="media" s={9} /></QuickButton>
          <QuickButton aria-label="更多">»</QuickButton>
        </QuickLaunch>
        <Task $look="alert"><Icon n="contact" s={9} />入口机制提前抢练群</Task>
        <Task><Icon n="browser" s={9} />360导航_新一代安...</Task>
        <Task><Icon n="group" s={9} />群通话-入口机制...</Task>
        <Task $look="current">
          <Icon n="logo" s={9} />
          <MonoLabel>70871284: FXCM-E...</MonoLabel>
          <Pointer width="7" height="10" viewBox="0 0 7 10" aria-hidden="true">
            <path d="M.5 0v8l2-1.800L4 9.500l1.300-.6L4 6h2.500z" fill="#fff" stroke="#333" strokeWidth=".5" />
          </Pointer>
        </Task>
        <Spacer />
        <Keyboard><Icon n="keys" s={9} /></Keyboard>
        <Tray>
          {["chevron", "books", "penguin", "net", "sound", "shield"].map((n) => <Icon key={n} n={n} s={9} />)}
          <Clock>19:09</Clock>
        </Tray>
      </TaskBar>
    </Page>
  );
}
